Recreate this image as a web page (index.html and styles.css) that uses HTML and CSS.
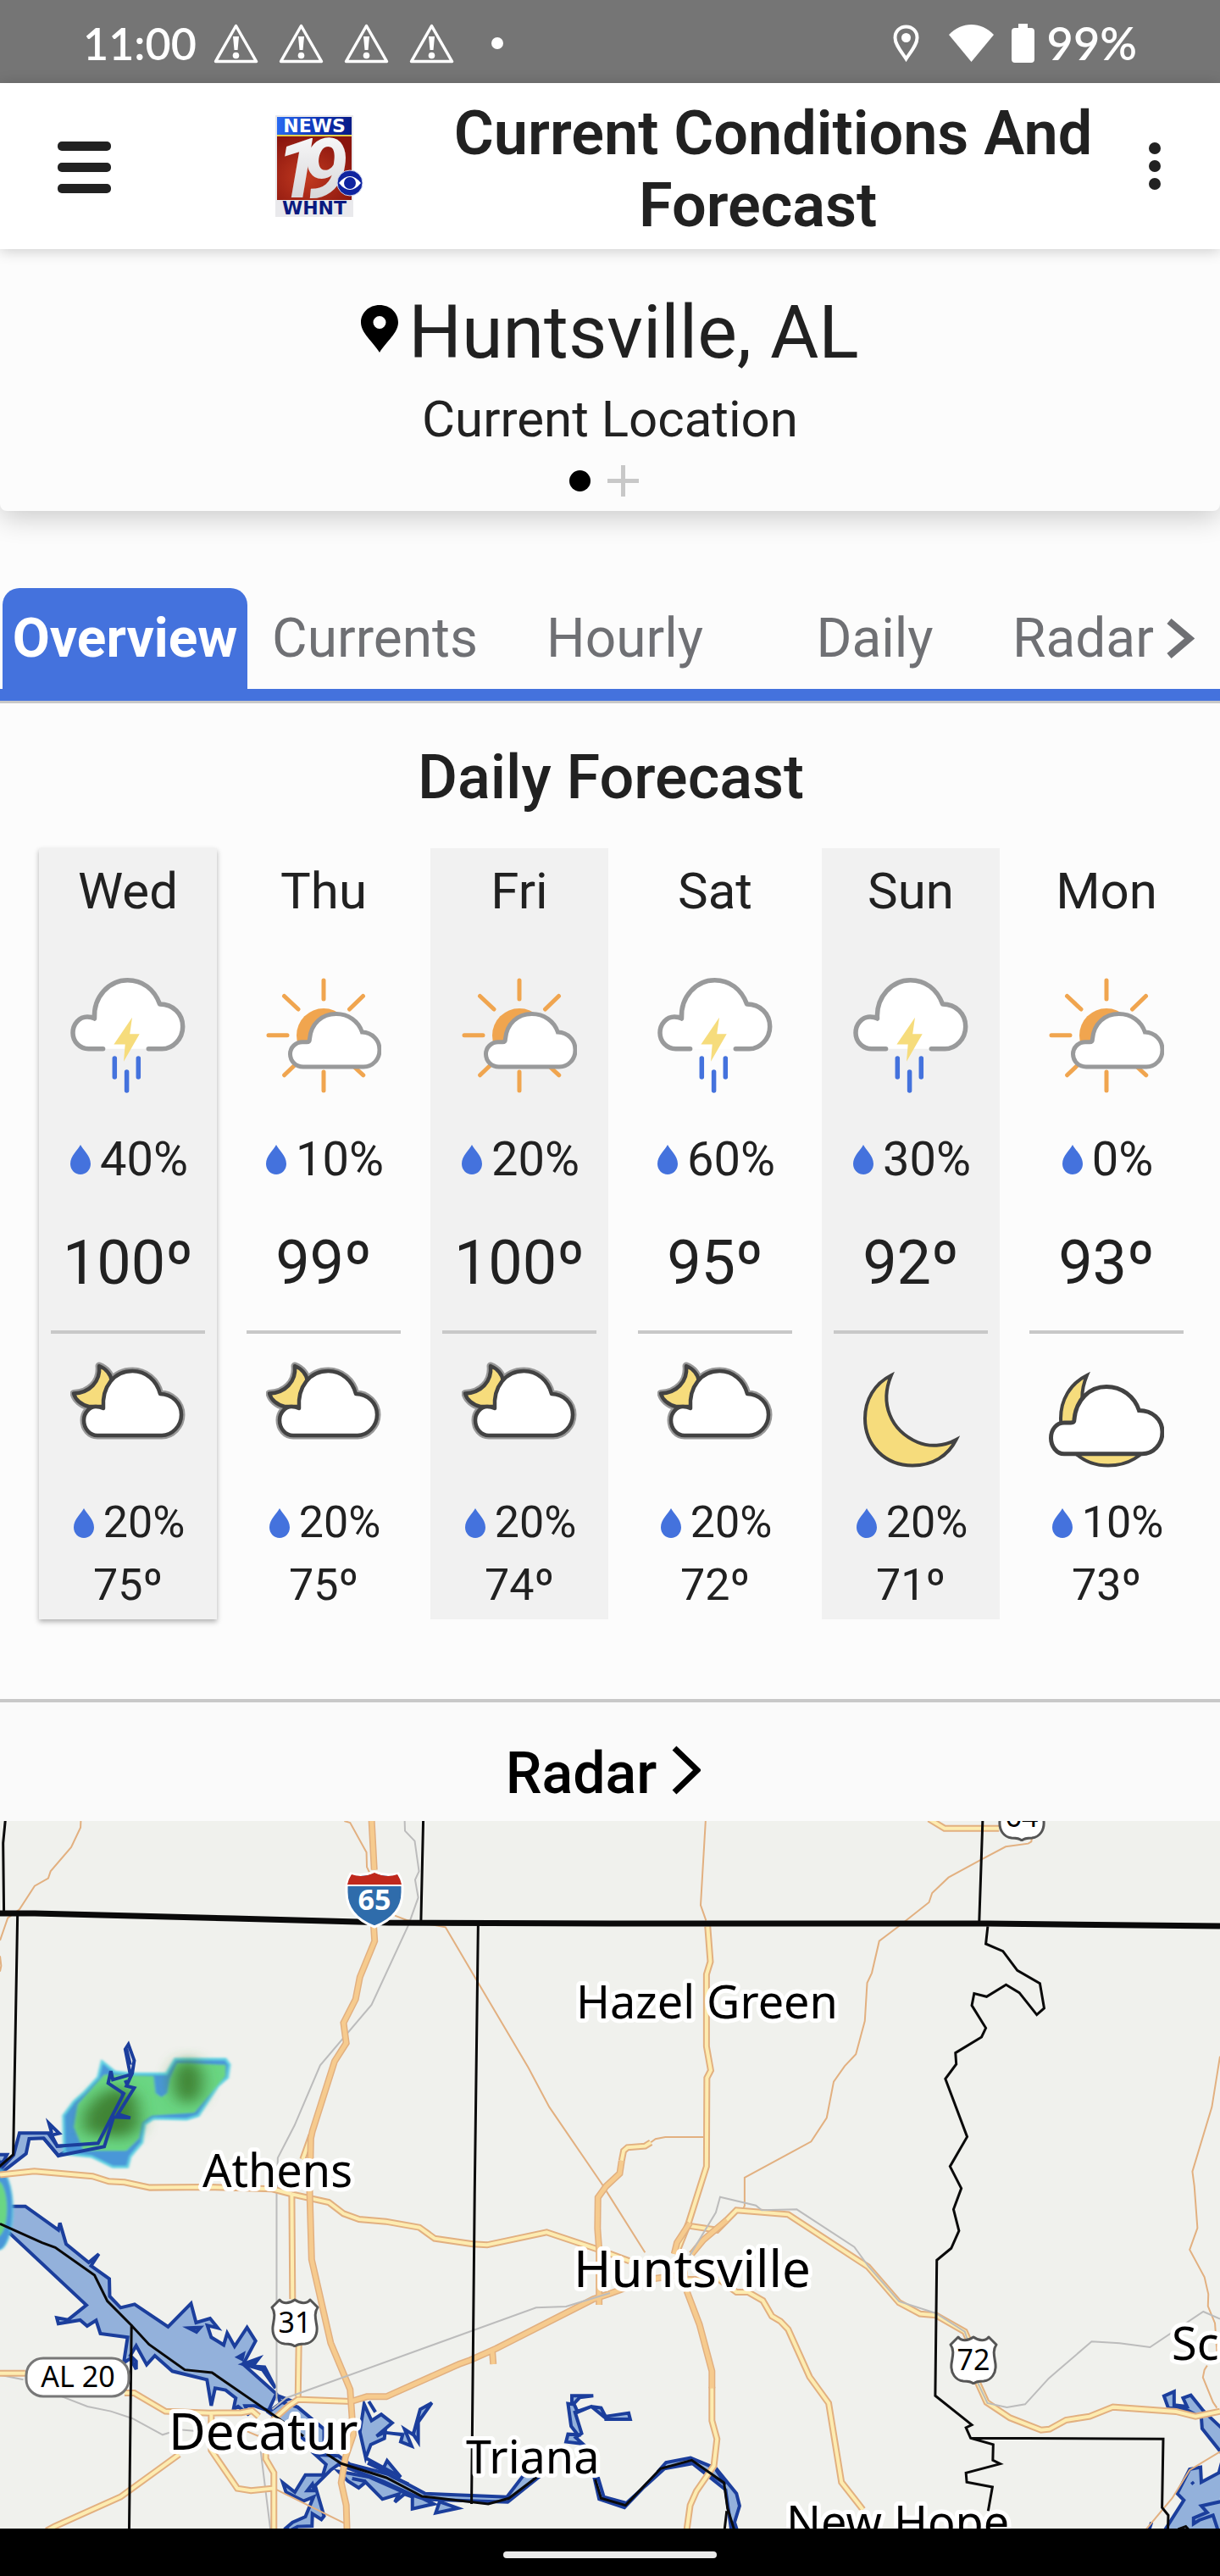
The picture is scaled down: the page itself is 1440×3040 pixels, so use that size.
FILE: index.html
```
<!DOCTYPE html>
<html lang="en">
<head>
<meta charset="utf-8">
<meta name="viewport" content="width=device-width, initial-scale=1">
<title>Current Conditions And Forecast</title>
<link rel="stylesheet" href="styles.css">
</head>
<body>

<svg class="sprite" aria-hidden="true">
  <symbol id="warning" viewBox="0 0 53 47">
    <path d="M26.500 2.500L50.500 44.500H2.500Z" fill="none" stroke="#fff" stroke-width="3.500" stroke-linejoin="round"/>
    <path d="M23 15H30L28.500 31H24.500Z" fill="#fff"/><circle cx="26.500" cy="37.500" r="3.800" fill="#fff"/>
  </symbol>
  <symbol id="drop" viewBox="0 0 24 35">
    <path d="M12 0C15 6 24 13 24 22.500C24 29.500 18.500 35 12 35C5.500 35 0 29.500 0 22.500C0 13 9 6 12 0Z" fill="#4472dd"/>
  </symbol>
  <symbol id="storm" viewBox="0 0 136 136">
    <path d="M38.600 83.800H21.600C11 83.800 3 75 3 65C3 54 11 46 20 46C23 46 26 46.500 28.500 48C27 22 46 2.800 67.500 2.800C85 2.800 99 13 105.600 31C121 31 132.700 42 132.700 57.400C132.700 72 121 83.800 108.300 83.800H92.300" fill="#fff" stroke="#999a9b" stroke-width="5.500" stroke-linecap="round" stroke-linejoin="round"/>
    <path d="M73 46.700L51.400 78.500H64.700L63 98.700L81.700 66.200H70.200Z" fill="#f6dc7c"/>
    <path d="M52.300 95V117M66.600 111V133M80.300 95V117" stroke="#4472dd" stroke-width="5.500" stroke-linecap="round"/>
  </symbol>
  <symbol id="partly-sunny" viewBox="0 0 136 136">
    <g stroke="#f0a54f" stroke-width="5" stroke-linecap="round">
      <path d="M68 3V25M3 67.700H25M98.500 37L114.500 21.500M38 37L21.500 21.500M21.600 114.800L36 101M104 105L114.800 114.800M68 111V133"/>
    </g>
    <circle cx="68" cy="68" r="32" fill="#f0a54f"/>
    <path d="M44 105C35 105 28.500 98 28.500 90C28.500 82 35 75.800 43 75.800H48C51 75.800 51.500 74 51.500 72C53 54 66 42.500 82.600 42.500C97 42.500 109 51 113.400 64C125 64.500 134 73 134 85C134 96 126 105 115 105Z" fill="#fff" stroke="#999a9b" stroke-width="5"/>
  </symbol>
  <symbol id="partly-night" viewBox="0 0 136 136">
    <g stroke-linejoin="round">
      <g fill="none" stroke="#999" stroke-width="9">
        <path d="M34 12C42 15 48 22 49 30L40 60H22C13 58 6 52 4 44.500C22 44 36 31 34 12Z"/>
        <path d="M32 94C23 94 16 86 16 76C16 67 23 60 30 60C33 60 36 60.500 39 62C37 36 52 18 73.500 18C89 18 102 29 106 45C120 45 131 56 131 69.500C131 83 120 94 108 94Z"/>
      </g>
      <path d="M34 12C42 15 48 22 49 30L40 60H22C13 58 6 52 4 44.500C22 44 36 31 34 12Z" fill="#f6dc7c" stroke="#424242" stroke-width="4.500"/>
      <path d="M32 94C23 94 16 86 16 76C16 67 23 60 30 60C33 60 36 60.500 39 62C37 36 52 18 73.500 18C89 18 102 29 106 45C120 45 131 56 131 69.500C131 83 120 94 108 94Z" fill="#fff" stroke="#424242" stroke-width="4.500"/>
    </g>
  </symbol>
  <symbol id="moon" viewBox="0 0 136 136">
    <path d="M45 23C25 33 14 52 14 74C14 106 38 129.500 70 129.500C94 129.500 112 118 121.500 99C107 107 90 108 76 102C44 88 31 56 45 23Z" fill="#f6dc7c" stroke="#424242" stroke-width="4"/>
  </symbol>
  <symbol id="cloudy-night" viewBox="0 0 136 136">
    <path d="M45 23C25 33 14 52 14 74C14 106 38 129.500 70 129.500C94 129.500 112 118 121.500 99C107 107 90 108 76 102C44 88 31 56 45 23Z" fill="#f6dc7c" stroke="#424242" stroke-width="4"/>
    <path d="M18 115.800C9 115.800 2.500 107 2.500 97C2.500 87 9 79 18 79H26C29 79 30 78 30 75C32 52 48 36.500 68 36.500C86 36.500 101 48 106.500 64.500C122 64.500 134 75 134 90C134 105 123 115.800 110 115.800Z" fill="#fff" stroke="#424242" stroke-width="5"/>
  </symbol>
  <symbol id="us-route" viewBox="0 0 58 58">
    <path d="M11 2C15 7 22 7 29 2C36 7 43 7 47 2L56 11C51 18 54 26 55 34C56 45 50 53 41 54C36 54 32 54 29 57C26 54 22 54 17 54C8 53 2 45 3 34C4 26 7 18 2 11Z" fill="#fff" stroke="#555" stroke-width="3" stroke-linejoin="round"/>
  </symbol>
</svg>

<div class="status-bar">
  <span class="clock">11:00</span>
  <span class="alerts">
    <svg class="alert"><use href="#warning"/></svg>
    <svg class="alert"><use href="#warning"/></svg>
    <svg class="alert"><use href="#warning"/></svg>
    <svg class="alert"><use href="#warning"/></svg>
  </span>
  <span class="more-dot"></span>
  <svg class="gps" viewBox="0 0 31 44"><path d="M15.500 2.500C8 2.500 2.500 8 2.500 15.500C2.500 24 10 32 15.500 40.500C21 32 28.500 24 28.500 15.500C28.500 8 23 2.500 15.500 2.500Z" fill="none" stroke="#fff" stroke-width="4"/><circle cx="15.500" cy="15.500" r="5.500" fill="#fff"/></svg>
  <svg class="wifi" viewBox="0 0 53 44"><path d="M0 12C15 -4 38 -4 53 12L26.500 44Z" fill="#fff"/></svg>
  <svg class="battery" viewBox="0 0 27 46"><path d="M8 0H19V5H23Q27 5 27 9V42Q27 46 23 46H4Q0 46 0 42V9Q0 5 4 5H8Z" fill="#fff"/></svg>
  <span class="charge">99%</span>
</div>

<header class="app-bar">
  <button class="menu-button" aria-label="Menu"><span></span><span></span><span></span></button>
  <svg class="logo" viewBox="0 0 104 120" role="img" aria-label="News 19 WHNT">
    <defs>
      <linearGradient id="news-blue"><stop offset="0" stop-color="#2a6af0"/><stop offset=".6" stop-color="#0b2fb0"/><stop offset="1" stop-color="#081b86"/></linearGradient>
      <radialGradient id="logo-red" cx=".4" cy=".65" r=".7"><stop offset="0" stop-color="#c23a20"/><stop offset="1" stop-color="#8a150e"/></radialGradient>
      <linearGradient id="silver" x2="0" y2="1"><stop offset="0" stop-color="#fff"/><stop offset="1" stop-color="#cdcdd0"/></linearGradient>
    </defs>
    <rect width="92" height="120" fill="#e9e9ec"/>
    <rect x="2" y="2" width="88" height="21" fill="url(#news-blue)"/>
    <rect x="2" y="23" width="88" height="2" fill="#e3cf4a"/>
    <rect x="2" y="25" width="88" height="75" fill="url(#logo-red)"/>
    <text class="logo-word" x="46" y="20" fill="#fff">NEWS</text>
    <text class="logo-number" x="0 31" y="97" fill="url(#silver)">19</text>
    <text class="logo-word" x="46" y="117" fill="#0b1a80">WHNT</text>
    <circle cx="88" cy="80" r="15" fill="#0f24a0" stroke="#cdd3ee" stroke-width="1"/>
    <path d="M75 80Q88 64 101 80Q88 96 75 80Z" fill="#fff"/><circle cx="88" cy="80" r="7" fill="#0f24a0"/>
  </svg>
  <h1 class="page-title">Current Conditions And Forecast&nbsp;&nbsp;</h1>
  <button class="more-button" aria-label="More options"><span></span><span></span><span></span></button>
</header>

<section class="location">
  <h2 class="place"><svg class="place-pin" viewBox="0 0 44 56"><path d="M22 0C9.500 0 0 9 0 20.500C0 33 14 43 22 56C30 43 44 33 44 20.500C44 9 34.500 0 22 0ZM22 13A7.500 7.500 0 1 1 22 28A7.500 7.500 0 1 1 22 13Z" fill="#000"/></svg>Huntsville, AL</h2>
  <p class="place-note">Current Location</p>
  <div class="pager">
    <span class="pager-dot"></span>
    <button class="pager-add" aria-label="Add location"><svg viewBox="0 0 37 37"><path d="M18.500 0V37M0 18.500H37" stroke="#c8c8c8" stroke-width="5"/></svg></button>
  </div>
</section>

<nav class="tabs">
  <a class="tab tab-active" href="#overview">Overview</a>
  <a class="tab" href="#currents">Currents</a>
  <a class="tab" href="#hourly">Hourly</a>
  <a class="tab" href="#daily">Daily</a>
  <a class="tab tab-last" href="#radar">Radar<svg class="tab-chevron" viewBox="0 0 34 47"><path d="M4 3L28 23.500L4 44" fill="none" stroke="#6f7074" stroke-width="8"/></svg></a>
</nav>

<main>
  <section class="forecast" id="overview">
    <h2 class="section-title">Daily Forecast</h2>
    <ol class="days">
      <li class="day day-today">
        <h3 class="day-name">Wed</h3>
        <svg class="day-icon"><use href="#storm"/></svg>
        <p class="rain"><svg class="drop"><use href="#drop"/></svg>40%</p>
        <p class="high">100º</p>
        <hr class="day-rule">
        <svg class="night-icon"><use href="#partly-night"/></svg>
        <p class="rain night-rain"><svg class="drop"><use href="#drop"/></svg>20%</p>
        <p class="low">75º</p>
      </li>
      <li class="day">
        <h3 class="day-name">Thu</h3>
        <svg class="day-icon"><use href="#partly-sunny"/></svg>
        <p class="rain"><svg class="drop"><use href="#drop"/></svg>10%</p>
        <p class="high">99º</p>
        <hr class="day-rule">
        <svg class="night-icon"><use href="#partly-night"/></svg>
        <p class="rain night-rain"><svg class="drop"><use href="#drop"/></svg>20%</p>
        <p class="low">75º</p>
      </li>
      <li class="day">
        <h3 class="day-name">Fri</h3>
        <svg class="day-icon"><use href="#partly-sunny"/></svg>
        <p class="rain"><svg class="drop"><use href="#drop"/></svg>20%</p>
        <p class="high">100º</p>
        <hr class="day-rule">
        <svg class="night-icon"><use href="#partly-night"/></svg>
        <p class="rain night-rain"><svg class="drop"><use href="#drop"/></svg>20%</p>
        <p class="low">74º</p>
      </li>
      <li class="day">
        <h3 class="day-name">Sat</h3>
        <svg class="day-icon"><use href="#storm"/></svg>
        <p class="rain"><svg class="drop"><use href="#drop"/></svg>60%</p>
        <p class="high">95º</p>
        <hr class="day-rule">
        <svg class="night-icon"><use href="#partly-night"/></svg>
        <p class="rain night-rain"><svg class="drop"><use href="#drop"/></svg>20%</p>
        <p class="low">72º</p>
      </li>
      <li class="day">
        <h3 class="day-name">Sun</h3>
        <svg class="day-icon"><use href="#storm"/></svg>
        <p class="rain"><svg class="drop"><use href="#drop"/></svg>30%</p>
        <p class="high">92º</p>
        <hr class="day-rule">
        <svg class="night-icon"><use href="#moon"/></svg>
        <p class="rain night-rain"><svg class="drop"><use href="#drop"/></svg>20%</p>
        <p class="low">71º</p>
      </li>
      <li class="day">
        <h3 class="day-name">Mon</h3>
        <svg class="day-icon"><use href="#partly-sunny"/></svg>
        <p class="rain"><svg class="drop"><use href="#drop"/></svg>0%</p>
        <p class="high">93º</p>
        <hr class="day-rule">
        <svg class="night-icon"><use href="#cloudy-night"/></svg>
        <p class="rain night-rain"><svg class="drop"><use href="#drop"/></svg>10%</p>
        <p class="low">73º</p>
      </li>
    </ol>
  </section>

  <section class="radar" id="radar">
    <h2 class="radar-title"><a href="#radar-map">Radar<svg class="radar-chevron" viewBox="0 0 34 58"><path d="M3 3L30 29L3 55" fill="none" stroke="#000" stroke-width="7"/></svg></a></h2>
    <svg class="map" id="radar-map" viewBox="0 0 1440 835" role="img" aria-label="Radar map of the Huntsville area">
      <defs>
        <filter id="soft"><feGaussianBlur stdDeviation="3"/></filter>
        <filter id="haze" x="-50%" y="-50%" width="200%" height="200%"><feGaussianBlur stdDeviation="22"/></filter>
        <!-- Highways are stroked twice: casing, then surface. -->
        <g id="highways">
          <g transform="translate(0 -9) scale(.4592 .3333)">
            <path d="M800 1140L778 1225M0 1280L88 1267L238 1285L280 1303L320 1306L385 1325L530 1323L700 1330L750 1348"/>
          </g>
          <g transform="translate(720 -9) scale(.4592 .3333)">
            <path d="M820 20L860 53H1000M251 400L258 525L248 570V825L259 910L249 937L248 1250L225 1350L202 1450L170 1560M105 1165L90 1178L45 1183L35 1195L30 1230"/>
          </g>
          <g transform="translate(0 431) scale(.4592 .3333)">
            <path d="M750 28L845 57L883 97L923 117L992 125L1078 146L1117 185L1215 205L1252 208L1405 163L1540 225L1618 265M750 28L752 400M768 560L766 745M903 762L766 755L740 780L700 830M0 662H65M320 732H345L425 797L540 803L620 802L648 795L665 815M543 805V935L610 1070L645 1078L700 1070M460 950L310 1100L140 1205L120 1220M683 945V965L704 1015V1220"/>
          </g>
          <g transform="translate(720 431) scale(.4592 .3333)">
            <path d="M202 140L275 155L325 85L458 100L663 285L743 412L797 452L838 457L912 515L920 540M945 695L968 765L1028 820L1108 863L1130 860L1172 828L1233 815L1293 782L1455 798L1505 815L1568 797M170 330H280L325 375H355L393 405L416 460L438 478L458 507L513 675L562 768L595 1048L650 1145M262 710V830L275 895L267 990L222 1080L206 1130L197 1220"/>
          </g>
        </g>
        <g id="freeways">
          <g transform="translate(0 -9) scale(.4592 .3333)">
            <path d="M955 20L962 200M960 390L963 452L925 580L914 658L883 742L890 813L860 878L803 1125L799 1150L796 1340L801 1580L850 1875L900 2040L908 2200L888 2280L877 2370L890 2450L892 2540"/>
          </g>
          <g transform="translate(720 431) scale(.4592 .3333)">
            <path d="M30 -90L25 -45L-10 0L-31 40L-32 150L-28 225V420M205 130L172 200L165 240M300 120L240 190L210 240M197 370L230 490L262 655V715M40 360L0 380L-43 400L-293 575L-358 615L-388 630L-575 745H-625L-665 762M-303 575L-300 630M100 330L200 310"/>
          </g>
        </g>
      </defs>

      <rect class="land" width="1440" height="835"/>

      <g class="water">
        <g transform="translate(0 -9) scale(.4592 .3333)">
          <path d="M0 1262L35 1210L50 1132H130L147 1178L200 1175L150 1212L112 1150L75 1152L67 1205L8 1268Z"/>
          <path d="M-10 1208H18L10 1230L0 1240Z"/>
        </g>
        <g transform="translate(0 431) scale(.4592 .3333)">
          <path d="M-10 71H65L150 155L154 130L170 205L228 270L254 240L234 282L281 328L282 390L310 430L346 418L432 498L491 415L504 483L540 468L560 502L533 493L543 535L575 562L584 520L603 567L635 500L657 548L625 630L710 735L690 795L655 778H630L640 810L612 780L600 790L606 750L580 722L553 715L543 777L532 685L443 655L398 600L377 632L350 565L335 600L350 620V648L335 610L318 625L328 535L258 522L247 475L224 495L206 474L150 487L146 466L175 473L222 421L25 167L-10 172Z"/>
          <path d="M625 630L665 610L655 628L635 636L680 640L708 715L675 650ZM485 502L515 500L505 516ZM612 605L625 595L622 612ZM715 742L740 755L720 765Z"/>
          <path d="M690 800L725 765L765 782L833 860V960L760 870Z"/>
          <path d="M810 950L870 955L900 985L1000 1020L1092 1088L1303 1100L1345 1025L1385 1030L1305 1118L1083 1108L985 1045L870 985L850 1005L810 1060L833 1168L826 1180L803 1160L802 1203L765 1205L745 1220L735 1210L752 1190L785 1170L806 1100L780 1115L735 1083L727 1050L758 1083L785 1022H830L838 985ZM790 1078L803 1055L808 1078Z"/>
          <path d="M870 1010L895 1045L922 1068L940 1048L983 1108L1025 1090L1015 1118L1040 1090L1060 1100V1142L1115 1125L1085 1105L1040 1085L950 1030ZM905 1035L940 1045M1130 1117L1177 1140L1120 1157Z"/>
          <path d="M936 772L955 830L980 808L1008 838L968 885L990 870L988 893L953 915L940 962L925 870ZM948 762L965 800"/>
          <path d="M988 872L1035 880L1030 905L1058 920L1040 860L1062 880L1080 790L1110 767L1075 835V905L1058 870M940 962L1030 1030L995 972L985 1000M945 980L975 1000L1010 1030L1050 1055"/>
          <path d="M1525 742H1470V772L1460 770L1468 850L1485 880L1460 878L1455 905L1498 912L1480 890L1495 875L1478 800L1520 780L1560 825L1545 785L1520 780L1485 800L1475 770L1490 748Z"/>
          <path d="M1528 1035L1540 1108L1605 1138L1698 1003L1775 980L1838 995L1893 1088L1901 1132L1888 1190L1895 1220H1880L1865 1075L1780 982L1708 1000L1610 1122L1552 1100L1538 1035Z"/>
          <path d="M1698 1000L1712 978L1775 962L1838 998L1865 1055L1780 980Z"/>
        </g>
        <g transform="translate(720 431) scale(.4592 .3333)">
          <path d="M-10 815L48 803L52 825H-10Z"/>
          <path d="M1450 727L1424 743L1435 785L1480 790L1520 820L1522 858L1575 950V860L1540 815L1525 795L1493 740L1473 750L1483 780L1450 775Z"/>
          <path d="M1575 965L1565 1015L1520 1048L1518 995L1490 1002L1458 1088L1475 1112L1425 1220H1575V1115L1520 1132L1535 1155L1500 1175V1195L1515 1182L1550 1165L1562 1215M1392 1190L1385 1220M1495 1047L1500 1055"/>
        </g>
      </g>

      <g transform="translate(0 -9) scale(.4592 .3333)">
        <g filter="url(#soft)">
          <path d="M262 878L295 915L340 922H428L450 870H580L590 890L585 935L560 965L510 1070L480 1083L395 1080L372 1100L365 1165L335 1215L328 1252H290L235 1215L165 1205L163 1070L190 1020L215 990L252 935Z" fill="#4a97d8" stroke="#62d3e2" stroke-width="3"/>
          <path d="M268 925L395 930L400 990L415 1005L430 990L437 940L455 885L580 890V930L500 1060L390 1070L365 1095L358 1150L325 1195H215L190 1110L200 1030Z" fill="#6bd683"/>
          <ellipse cx="-5" cy="1402" rx="38" ry="145" fill="#4a97d8" stroke="#62d3e2" stroke-width="3"/>
          <ellipse cx="-8" cy="1400" rx="26" ry="100" fill="#6bd683"/>
        </g>
        <g filter="url(#haze)" fill="#3f8436">
          <ellipse cx="483" cy="950" rx="38" ry="78"/>
          <path d="M300 965L350 1000L360 1110L320 1150L215 1130L215 1060L250 1000Z"/>
        </g>
      </g>
      <g class="shore" transform="translate(0 -9) scale(.4592 .3333)">
        <path d="M112 1150L150 1212L268 1180L292 1075L335 1078L303 1065L345 972L325 965L340 920L345 875L330 818L322 835L335 925L290 943L285 913L278 955L318 992L252 1168L147 1178L128 1140L152 1133L126 1098L133 1132M325 835L335 890M322 945L328 965M315 985V1000"/>
      </g>

      <g class="rail">
        <g transform="translate(0 -9) scale(.4592 .3333)">
          <path d="M1040 20L1041 62L1066 98L1077 205L1067 235L1075 298L1050 395L955 678L823 892L757 1105L714 1220L711 1350V2080"/>
        </g>
        <g transform="translate(0 431) scale(.4592 .3333)">
          <path d="M0 668L60 685M150 740L225 780L285 797L340 822L418 880L460 862L500 866M665 880L672 960L695 1215"/>
        </g>
      </g>

      <g class="minor-road">
        <g transform="translate(0 -9) scale(.4592 .3333)">
          <path d="M208 20L207 50L183 120L130 205L124 230L89 257L50 340L20 370L0 450M0 505L3 540L0 560M885 27L900 33L942 138L943 190L950 210M1015 362L1045 378L1145 403L1225 590L1358 900L1412 1040L1547 1312L1568 1358L1658 1555"/>
        </g>
        <g transform="translate(720 -9) scale(.4592 .3333)">
          <path d="M246 20L233 325L247 380M1085 80L1083 100L1075 107L1017 118L955 163L870 227L828 282L820 315L740 402L692 452L673 565L661 600L655 735L632 853L603 895L575 950L557 1078L517 1162L346 1290V1390L340 1405M243 1146H142L117 1153L105 1165M1568 860L1547 1040L1497 1268L1502 1320L1510 1468L1490 1545L1528 1642L1538 1702L1537 1745L1555 1805L1560 1905M1535 1955L1528 1970L1524 1997L1550 2085L1560 2105M1568 2260L1490 2325L1445 2425L1375 2540"/>
        </g>
        <g transform="translate(0 431) scale(.4592 .3333)">
          <path d="M704 1070L885 1193M630 865L665 885"/>
        </g>
      </g>

      <use class="casing" href="#highways"/>
      <use class="highway" href="#highways"/>
      <use class="casing" href="#freeways"/>
      <use class="freeway" href="#freeways"/>

      <g class="rail" transform="translate(720 431) scale(.4592 .3333)">
        <path d="M-868 790L-833 750L-190 430L-113 426L0 378M205 245L272 93L283 38L375 68L390 85L480 82L628 215L665 285L743 408L838 450L912 515L918 540M945 695L970 768L1020 783L1067 772L1128 680L1238 550L1310 556L1388 570L1525 444L1568 470"/>
      </g>

      <g class="county">
        <g transform="translate(0 -9) scale(.4592 .3333)">
          <path d="M14 20L8 105L10 345M1088 20L1082 385M45 360L34 1208L-5 1255M1229 395L1220 1350L1212 2445"/>
        </g>
        <g transform="translate(720 -9) scale(.4592 .3333)">
          <path d="M958 20L949 385M971 400L966 462L1010 488L1047 556L1105 602L1116 690L1097 713L1052 635L1018 607L968 649L936 638L930 680L966 760L955 792L888 848L890 888L862 940L918 1145L874 1250L903 1328L883 1402L897 1478L877 1540L840 1582L836 2062L930 2165L915 2175L927 2212L985 2235L984 2290L1003 2303L915 2335L917 2368L983 2385L972 2470M927 2212L1422 2215L1419 2458L1435 2485L1434 2540M1460 2535L1480 2525L1490 2540"/>
        </g>
        <g transform="translate(0 431) scale(.4592 .3333)">
          <path d="M338 490L332 1220M0 133L108 200L142 217L243 315L276 407L338 493L383 560L475 650L545 660L705 812L780 885M840 948L877 982L993 1032L1085 1098L1255 1125L1308 1105L1380 1030M1530 1038L1545 1105L1608 1130L1698 1000L1778 970L1861 1050L1870 1140L1888 1220M1868 1150L1862 1220"/>
        </g>
      </g>
      <path class="state" d="M0 109L41 109L276 115L459 120L720 121H1166L1440 124"/>

      <path d="M414 62Q428 66 442 60Q456 66 470 62Q476 72 475 84Q475 112 442 125Q409 112 409 84Q408 72 414 62Z" fill="#2f6cab" stroke="#fff" stroke-width="3"/>
      <path d="M415 63Q428 68 442 61Q456 68 469 63Q473 69 474 75H410Q411 69 415 63Z" fill="#c0281c"/>
      <path d="M410 76H474" stroke="#fff" stroke-width="2"/>
      <text class="shield-text interstate-text" x="442" y="105">65</text>

      <svg x="319" y="563" width="58" height="58"><use href="#us-route"/></svg>
      <text class="shield-text" x="348" y="604">31</text>
      <svg x="1120" y="607" width="58" height="58"><use href="#us-route"/></svg>
      <text class="shield-text" x="1149" y="648">72</text>
      <svg x="1177" y="-34" width="58" height="58"><use href="#us-route"/></svg>
      <text class="shield-text" x="1206" y="7">64</text>
      <rect x="31" y="634" width="121" height="45" rx="20" fill="#fff" stroke="#777" stroke-width="3"/>
      <text class="shield-text" x="92" y="668">AL 20</text>

      <g class="place-label">
        <text x="680" y="233">Hazel Green</text>
        <text x="239" y="432">Athens</text>
        <text x="550" y="770">Triana</text>
        <text x="928" y="847">New Hope</text>
        <text x="1383" y="636">Scottsboro</text>
        <text class="city" x="677" y="550">Huntsville</text>
        <text class="city" x="199" y="742">Decatur</text>
      </g>
    </svg>
  </section>
</main>

<footer class="home-bar"><span class="home-pill"></span></footer>
</body>
</html>
```
FILE: styles.css
```
* { box-sizing: border-box; }

body {
  margin: 0;
  background: #fcfcfc;
  color: #212121;
  font-family: Roboto, "Liberation Sans", sans-serif;
}

h1, h2, h3, p, ol { margin: 0; padding: 0; font-weight: 400; }
ol { list-style: none; }
a { color: inherit; text-decoration: none; }
button { padding: 0; border: 0; background: none; cursor: pointer; }
svg { display: block; flex: none; }
.sprite { position: absolute; width: 0; height: 0; }

/* System status bar */
.status-bar {
  display: flex;
  align-items: center;
  height: 98px;
  padding: 4px 98px 0;
  background: #757575;
  color: #fff;
  font-family: Lato, Roboto, sans-serif;
  font-size: 54px;
  font-weight: 600;
  line-height: 60px;
}
.clock { font-size: 52px; }
.alerts { display: flex; gap: 24px; margin-left: 20px; }
.alert { width: 53px; height: 47px; }
.more-dot { width: 14px; height: 14px; margin: 0 auto 0 44px; border-radius: 50%; background: #fff; }
.gps { width: 31px; height: 44px; margin-right: 35px; }
.wifi { width: 53px; height: 44px; margin-right: 21px; }
.battery { width: 27px; height: 46px; margin-right: 15px; }

/* App bar */
.app-bar {
  position: relative;
  display: flex;
  align-items: center;
  min-height: 196px;
  padding: 0 70px 0 68px;
  background: #fff;
  box-shadow: 0 2px 16px rgba(0, 0, 0, .2);
}
.menu-button { display: grid; gap: 14px; width: 63px; padding-top: 3px; }
.menu-button span { height: 11px; border-radius: 5px; background: #212121; }
.logo { width: 104px; height: 120px; margin-left: 194px; }
.logo-word { font: 700 22px "DejaVu Sans", sans-serif; text-anchor: middle; }
.logo-number { font: italic 700 98px Roboto, sans-serif; }
.page-title {
  flex: 1;
  margin-left: 40px;
  padding-top: 7px;
  font-size: 72px;
  font-weight: 600;
  line-height: 85px;
  text-align: center;
}
.more-button { display: grid; gap: 7px; width: 14px; }
.more-button span { height: 14px; border-radius: 50%; background: #212121; }

/* Location card */
.location {
  display: flex;
  flex-direction: column;
  align-items: center;
  gap: 17px;
  padding: 48px 24px 17px;
  border-radius: 0 0 8px 8px;
  background: #fcfcfc;
  box-shadow: 0 8px 32px rgba(0, 0, 0, .2);
}
.place { display: flex; align-items: center; gap: 12px; font-size: 88px; line-height: 100px; }
.place-pin { width: 44px; height: 56px; margin-bottom: 8px; }
.place-note { font-size: 60px; line-height: 72px; }
.pager { display: flex; align-items: center; gap: 20px; height: 38px; padding-right: 14px; }
.pager-dot { width: 25px; height: 25px; border-radius: 50%; background: #000; }
.pager-add, .pager-add svg { width: 37px; height: 37px; }

/* Tabs */
.tabs {
  display: grid;
  grid-template-columns: repeat(4, 295fr) 260fr;
  margin-top: 91px;
  border-bottom: 14px solid #4472dd;
  box-shadow: 0 3px 0 #c8c8c8;
}
.tab {
  margin: 0 3px;
  color: #6f7074;
  font-size: 64px;
  line-height: 119px;
  text-align: center;
}
.tab-active { border-radius: 20px 20px 0 0; background: #4472dd; color: #fff; font-weight: 700; }
.tab-last { display: flex; align-items: center; gap: 14px; padding-left: 12px; }
.tab-chevron { width: 34px; height: 47px; }

/* Daily forecast */
.forecast { padding: 49px 29px 94px 46px; }
.section-title { padding-right: 15px; font-size: 72px; font-weight: 500; line-height: 84px; text-align: center; }
.days { display: grid; grid-template-columns: repeat(6, 1fr); gap: 21px; margin-top: 41px; }
.day { display: flex; flex-direction: column; align-items: center; padding: 15px 14px 10px; }
.day:nth-child(odd) { background: #f1f1f1; }
.day-today { box-shadow: 0 3px 6px rgba(0, 0, 0, .3); }
.day-name { font-size: 60px; line-height: 72px; }
.day-icon { width: 136px; height: 136px; margin-top: 66px; }
.night-icon { width: 136px; height: 136px; margin-top: 26px; }
.rain { display: flex; align-items: center; gap: 11px; margin-top: 46px; padding-left: 3px; font-size: 56px; line-height: 64px; }
.night-rain { margin-top: 31px; font-size: 52px; line-height: 60px; }
.drop { width: 24px; height: 35px; }
.high { margin-top: 49px; font-size: 72px; line-height: 84px; }
.day-rule { align-self: stretch; height: 4px; margin: 37px 0 0; border: 0; background: #c8c8c8; }
.low { margin-top: 14px; font-size: 52px; line-height: 60px; }

/* Radar */
.radar { border-top: 4px solid #c8c8c8; background: #fafafa; }
.radar-title {
  padding: 44px 16px 16px 0;
  color: #000;
  font-size: 68px;
  font-weight: 500;
  line-height: 80px;
  text-align: center;
}
.radar-title a { display: inline-flex; align-items: center; gap: 18px; }
.radar-chevron { width: 34px; height: 58px; margin-bottom: 8px; }

.map { width: 100%; }
.map path { vector-effect: non-scaling-stroke; }
.land { fill: #f0f1ed; }
.water { fill: #93b1db; stroke: #1b3e9c; stroke-width: 4; }
.shore { fill: none; stroke: #1b3e9c; stroke-width: 4; }
.rail { fill: none; stroke: #bcbcbc; stroke-width: 2; }
.minor-road { fill: none; stroke: #e2b080; stroke-width: 2; }
.casing { fill: none; stroke: #e2b080; stroke-width: 8; }
.highway { fill: none; stroke: #fdecb0; stroke-width: 4; }
.freeway { fill: none; stroke: #f6cb8e; stroke-width: 5; }
.county { fill: none; stroke: #0a0a0a; stroke-width: 3; }
.state { fill: none; stroke: #0a0a0a; stroke-width: 7; }
.shield-text { font: 400 34px "Noto Sans", sans-serif; text-anchor: middle; }
.interstate-text { fill: #fff; font-weight: 700; }
.place-label {
  fill: #000;
  stroke: #fff;
  stroke-width: 10;
  stroke-linejoin: round;
  paint-order: stroke;
  font: 400 54px "Noto Sans", sans-serif;
}
.city { font-size: 60px; }

/* System gesture bar */
.home-bar { display: flex; align-items: center; justify-content: center; height: 56px; padding-top: 6px; background: #000; }
.home-pill { width: 252px; height: 8px; border-radius: 4px; background: #ebebeb; }
```
